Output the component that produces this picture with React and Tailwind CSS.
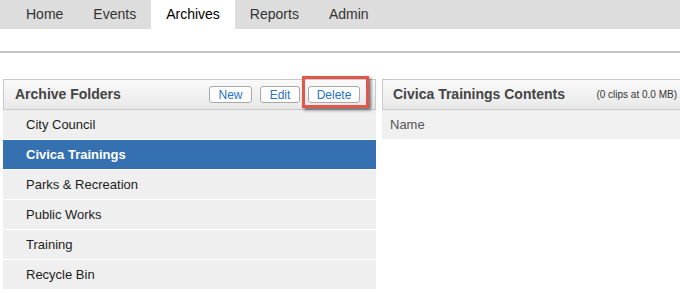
export default function App() {
    const tabs = ["Home", "Events", "Archives", "Reports", "Admin"];
    const folders = ["City Council", "Civica Trainings", "Parks & Recreation", "Public Works", "Training", "Recycle Bin"];

    return (
        <div className="w-[680px] h-[293px] overflow-hidden bg-white font-['Liberation_Sans',Arial,sans-serif]">
            <div className="h-[29px] bg-[#dddddd] flex pl-[11px]">
                {tabs.map(tab => (
                    <div
                        key={tab}
                        className={
                            tab === "Archives"
                                ? "px-[15px] flex items-center text-[14px] bg-white text-black"
                                : "px-[15px] flex items-center text-[14px] text-[#333]"
                        }
                    >
                        {tab}
                    </div>
                ))}
            </div>
            <div className="h-[24px] border-b-2 border-b-[#c4c4c4]"></div>

            <div className="flex gap-[6px] pl-[3px] mt-[26px]">
                <div className="w-[373px] shrink-0 flex flex-col">
                    <div className="h-[31px] border border-[#c9c9c9] bg-gradient-to-b from-[#fafafa] to-[#e8e8e8] flex items-center justify-between pl-[11px] pr-[15px]">
                        <span className="text-[14px] font-bold text-[#444]">Archive Folders</span>
                        <div className="flex items-center gap-[8px]">
                            <button className="w-[43px] h-[17px] border border-[#a8a8a8] rounded-[3px] bg-white text-[12px] leading-none text-[#2a72c4]">New</button>
                            <button className="w-[40px] h-[17px] border border-[#a8a8a8] rounded-[3px] bg-white text-[12px] leading-none text-[#2a72c4]">Edit</button>
                            <div className="relative flex">
                                <button className="w-[52px] h-[17px] border border-[#a8a8a8] rounded-[3px] bg-white text-[12px] leading-none text-[#2a72c4]">Delete</button>
                                <div className="absolute left-[-6px] top-[-10px] right-[-9px] bottom-[-5px] border-[3px] border-[#e2574c] shadow-[2px_2px_3px_rgba(0,0,0,0.55)]"></div>
                            </div>
                        </div>
                    </div>
                    <div className="flex flex-col gap-[1px] bg-white">
                        {folders.map(name => (
                            <div
                                key={name}
                                className={
                                    name === "Civica Trainings"
                                        ? "h-[29px] flex items-center pl-[23px] bg-[#3571b1] text-white font-bold text-[13px]"
                                        : "h-[29px] flex items-center pl-[23px] bg-[#efefef] text-[#1c1c1c] text-[13px]"
                                }
                            >
                                {name}
                            </div>
                        ))}
                    </div>
                </div>

                <div className="w-[300px] shrink-0 flex flex-col">
                    <div className="h-[31px] border border-[#c9c9c9] bg-gradient-to-b from-[#fafafa] to-[#e8e8e8] flex items-center justify-between pl-[10px] pr-[4px]">
                        <span className="text-[14px] font-bold text-[#444]">Civica Trainings Contents</span>
                        <span className="text-[10px] text-[#333]">(0 clips at 0.0 MB)</span>
                    </div>
                    <div className="h-[29px] flex items-center pl-[8px] bg-[#f0f0f0] text-[13px] text-[#555]">Name</div>
                </div>
            </div>
        </div>
    );
}
